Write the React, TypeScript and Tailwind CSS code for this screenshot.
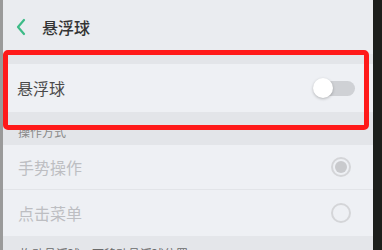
import React from 'react';

const font = { fontFamily: '"Noto Sans CJK SC", "Noto Sans", sans-serif' };

function Toggle() {
  return (
    <div className="relative w-[42px] h-[20px] flex items-center">
      <div className="absolute left-[6px] right-0 h-[15px] rounded-full bg-[#cfd1d5]" />
      <div className="relative w-[20px] h-[20px] rounded-full bg-white shadow-[0_1px_3px_rgba(0,0,0,0.25)]" />
    </div>
  );
}

function Radio({ checked }: { checked?: boolean }) {
  return (
    <div className="w-[20px] h-[20px] rounded-full border-2 border-[#d4d5d8] flex items-center justify-center">
      {checked && <div className="w-[12px] h-[12px] rounded-full bg-[#c9cacd]" />}
    </div>
  );
}

export default function App() {
  return (
    <div className="w-[382px] h-[250px] overflow-hidden flex bg-[#eceef2]" style={font}>
      <div className="w-[3px] bg-[#9a9a9a]" />
      <div className="relative flex-1 flex flex-col">
        <div className="h-[54px] shrink-0 flex items-center pl-[12px] bg-[#eaecf0]">
          <svg width="12" height="18" viewBox="0 0 12 18" fill="none">
            <path d="M9 2 L3 9 L9 16" stroke="#3dbb87" strokeWidth="2.2" strokeLinecap="round" strokeLinejoin="round" />
          </svg>
          <span className="ml-[15px] text-[16px] font-medium text-[#333]">悬浮球</span>
        </div>
        <div className="h-[10px] shrink-0 bg-[#e3e5e9]" />
        <div className="h-[48px] shrink-0 flex items-center justify-between pl-[14px] pr-[18px] bg-[#eef0f4]">
          <span className="text-[16px] text-[#4a4a4a]">悬浮球</span>
          <Toggle />
        </div>
        <div className="h-[33px] shrink-0 flex items-end pb-[4px] pl-[15px] bg-[#e3e5e9]">
          <span className="text-[12px] text-[#8a8a8a]">操作方式</span>
        </div>
        <div className="h-[45px] shrink-0 flex items-center justify-between pl-[15px] pr-[22px] bg-[#eef0f4] border-b border-[#e2e4e8]">
          <span className="text-[16px] text-[#bdbec2]">手势操作</span>
          <Radio checked />
        </div>
        <div className="h-[46px] shrink-0 flex items-center justify-between pl-[15px] pr-[22px] bg-[#eef0f4]">
          <span className="text-[16px] text-[#bdbec2]">点击菜单</span>
          <Radio />
        </div>
        <div className="flex-1 pl-[17px] pt-[4px] bg-[#e4e6ea]">
          <span className="text-[12px] text-[#6a6a6a]">拖动悬浮球，可移动悬浮球位置</span>
        </div>
        <div className="absolute left-0 top-[50px] w-[366px] h-[80px] border-[5px] border-[#ff1a1a] rounded-[5px]" />
      </div>
      <div className="w-[9px] bg-[#1c1f1c]" />
    </div>
  );
}
